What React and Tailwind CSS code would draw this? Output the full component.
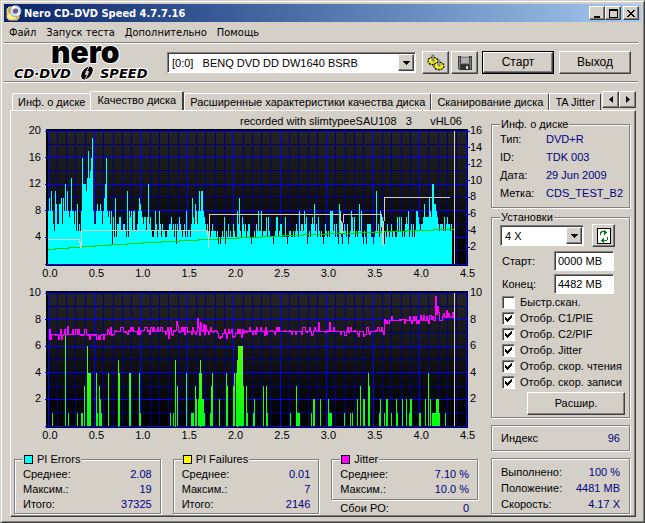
import { useState } from "react";

// PI errors, one base-36 digit per pixel column
const PIE =
  "8a8b865b96699a6a8c8b878d8868595658" +
  "gcccbdhdegj8668988986" +
  "8acg878683" +
  "74a46677556654b4878588556" +
  "8a9876775" +
  "7c675445864586465544556675646365765456484554" +
  "6a76986" +
  "8b8bb8765655456555453434547354645446544" +
  "86a547656456" +
  "6434454658558455574754443457745664447434554454" +
  "56548566586734546769564754543465454888564643984356546" +
  "3458757454595843543666644345b56485763546545645544757" +
  "574546768456464588765667977" +
  "77a87cc998765666575676656";

// PI failures: [x, width, value]
const PIF = [
  [4, 1, 1], [17, 1, 7], [20, 1, 1], [29, 1, 1], [33, 2, 1], [36, 1, 3],
  [39, 1, 6], [40, 3, 4], [48, 1, 4], [49, 1, 1], [51, 1, 3], [52, 1, 2],
  [53, 1, 1], [60, 1, 4], [70, 1, 5], [71, 1, 4], [81, 2, 4], [91, 1, 4],
  [92, 1, 1], [122, 1, 1], [125, 1, 1], [127, 1, 5], [129, 1, 3], [138, 1, 4],
  [143, 3, 1], [147, 1, 3], [148, 1, 2], [150, 1, 2], [151, 1, 4], [152, 1, 5],
  [153, 1, 4], [154, 2, 2], [156, 1, 1], [162, 1, 1], [163, 1, 3], [164, 1, 4],
  [171, 1, 2], [178, 1, 4], [179, 1, 3], [185, 1, 3], [186, 1, 4], [188, 1, 4],
  [189, 1, 5], [190, 5, 6], [195, 1, 3], [198, 1, 3], [199, 1, 1], [205, 1, 1],
  [206, 1, 2], [215, 1, 3], [218, 1, 3], [219, 1, 1], [242, 1, 1], [248, 1, 3],
  [249, 3, 1], [263, 1, 1], [265, 2, 2], [272, 1, 2], [280, 1, 2], [281, 3, 1],
  [296, 1, 1], [302, 1, 1], [304, 1, 1], [309, 1, 2], [312, 1, 3], [315, 2, 2],
  [320, 1, 4], [321, 1, 3], [331, 1, 1], [332, 1, 2], [336, 1, 1], [338, 2, 2],
  [343, 1, 1], [348, 1, 2], [349, 1, 1], [354, 1, 2], [358, 1, 2], [361, 1, 1],
  [362, 2, 2], [371, 2, 1], [377, 1, 2], [380, 1, 4], [382, 1, 2], [384, 4, 1],
  [388, 3, 2], [391, 1, 1], [397, 1, 1],
];

const JITTER_PEAKS = {
  19: 7.5, 128: 7.9, 129: 7.6, 120: 6.6, 149: 8.1, 152: 7.8, 155: 7.7, 157: 7.6,
  171: 6.6, 173: 6.7, 178: 6.6, 193: 6.7, 270: 7.8, 281: 7.8, 310: 6.8, 315: 6.8,
  387: 9.8, 388: 8.4, 389: 9, 390: 8.6, 398: 8.7, 404: 8.6,
};

const PLOT_W = 418;
const PLOT_H = 133;

function jitterAt(x) {
  if (JITTER_PEAKS[x]) return JITTER_PEAKS[x];
  const r = Math.abs(Math.sin(x * 12.9898) * 43758.5453) % 1;
  const spike = r > 0.8 ? 0.25 : r < 0.15 ? -0.2 : 0;
  let base = 7.15;
  if (x < 60) base = 6.9;
  else if (x > 168 && x < 196) base = 7;
  else if (x > 393) base = 8.2;
  else if (x > 335) base = 8;
  return base + (x < 60 ? spike * 1.4 : spike) + (r - 0.5) * 0.15;
}

const pieBars = PIE.slice(0, 407)
  .split("")
  .map((c, i) => `M${i + 0.5} ${PLOT_H}V${Math.round(PLOT_H - parseInt(c, 36) * 6.65)}`)
  .join("");

const jitterLine = Array.from({ length: 406 }, (_, i) => {
  const y = Math.round(PLOT_H - jitterAt(i) * 13.3) + 0.5;
  return `${i ? "V" : "M0.5 "}${y}H${i + 1.5}`;
}).join("");

function Chart({ left, right, label, children }) {
  return (
    <svg
      viewBox="-34 -3 472 151"
      className="block w-full h-auto overflow-visible font-['Liberation_Sans',Arial,sans-serif] text-[11px]"
      role="img"
      aria-label={label}
    >
      <defs>
        <linearGradient id="plotBg" x1="0" y1="0" x2="0" y2="1">
          <stop offset="0" stopColor="#242424" />
          <stop offset="1" stopColor="#000" />
        </linearGradient>
        <linearGradient id="pif" gradientUnits="userSpaceOnUse" x1="0" y1="133" x2="0" y2="40">
          <stop offset="0" stopColor="#00ff14" />
          <stop offset="1" stopColor="#66ff00" />
        </linearGradient>
      </defs>
      <rect x="-2" y="-2" width="422" height="137" fill="#000" />
      <rect width={PLOT_W} height={PLOT_H} fill="url(#plotBg)" />
      <g shapeRendering="crispEdges" fill="none">
        {Array.from({ length: 46 }, (_, i) => (
          <path
            key={i}
            d={`M${Math.floor(i * 9.29) + 0.5} 0V${PLOT_H}`}
            stroke={i % 5 ? "#000080" : "#0000ff"}
          />
        ))}
        {Array.from({ length: 11 }, (_, i) => (
          <path
            key={i}
            d={`M${i % 2 ? 0 : -3} ${Math.floor(i * 13.3) + 0.5}H420`}
            stroke={i % 2 ? "#000080" : "#0000ff"}
          />
        ))}
        {right.ticks && right.labels.map((t, i) => (
          <path key={t} d={`M418 ${Math.floor(i * 16.6) + 0.5}h4`} stroke="#0000ff" />
        ))}
        {children}
        <path d={`M406.5 0V${PLOT_H}`} stroke="#d4d0c8" />
      </g>
      {left.labels.map((t, i) => (
        <text key={t} x="-7" y={3 + i * 26.6} textAnchor="end">{t}</text>
      ))}
      {right.labels.map((t, i) => (
        <text key={t} x="422" y={3 + i * right.step}>{t}</text>
      ))}
      {["0.0", "0.5", "1.0", "1.5", "2.0", "2.5", "3.0", "3.5", "4.0", "4.5"].map((t, i) => (
        <text key={t} x={2 + i * 46.4} y="146" textAnchor="middle">{t}</text>
      ))}
    </svg>
  );
}

function Group({ title, swatch, className = "", children }) {
  return (
    <fieldset
      className={`min-w-0 border border-[#808080] shadow-[1px_1px_0_#fff,inset_1px_1px_0_#fff] ${className}`}
    >
      {title && (
        <legend className="ml-2 flex h-3 items-center gap-1 bg-[#d4d0c8] px-px leading-3">
          {swatch && <span className={`size-[9px] border border-black ${swatch}`} />}
          {title}
        </legend>
      )}
      {children}
    </fieldset>
  );
}

function Row({ label, value, height = "h-4" }) {
  return (
    <div className={`flex items-center justify-between ${height}`}>
      <dt>{label}</dt>
      <dd className="text-[#000080]">{value}</dd>
    </div>
  );
}

function Stats({ rows, className = "px-2 pt-[2px] pb-px" }) {
  return (
    <dl className={className}>
      {rows.map(([k, v]) => (
        <Row key={k} label={k} value={v} height="h-[15px]" />
      ))}
    </dl>
  );
}

const RAISED =
  "bg-[#d4d0c8] border border-t-white border-l-white border-r-[#404040] border-b-[#404040] shadow-[inset_-1px_-1px_0_#808080]";
const SUNKEN =
  "bg-white border border-t-[#808080] border-l-[#808080] border-r-white border-b-white shadow-[inset_1px_1px_0_#404040]";

function Combo({ label, options, className = "" }) {
  return (
    <div className={`relative ${className}`}>
      <select aria-label={label} className={`h-[21px] w-full appearance-none pt-px pl-1 outline-none ${SUNKEN}`}>
        {options.map((o) => (
          <option key={o}>{o}</option>
        ))}
      </select>
      <span className={`pointer-events-none absolute top-[2px] right-[2px] flex h-[17px] w-4 items-center justify-center ${RAISED}`}>
        <svg width="7" height="4" shapeRendering="crispEdges"><path d="M0 0h7v1h-1v1h-1v1h-1v1h-1v-1h-1v-1h-1v-1h-1z" /></svg>
      </span>
    </div>
  );
}

function Check({ label, checked, onChange }) {
  return (
    <label className="flex h-4 items-center gap-[5px] whitespace-nowrap">
      <span className="relative flex">
        <input
          type="checkbox"
          checked={checked}
          onChange={onChange}
          className={`size-[13px] appearance-none ${SUNKEN}`}
        />
        {checked && (
          <svg className="pointer-events-none absolute top-[3px] left-[3px]" width="7" height="7" shapeRendering="crispEdges">
            <path d="M0 2h1v1h1v1h1v-1h1v-1h1v-1h1v-1h1v3h-1v1h-1v1h-1v1h-1v1h-1v-1h-1v-1h-1z" />
          </svg>
        )}
      </span>
      {label}
    </label>
  );
}

function Logo() {
  return (
    <svg width="152" height="37" viewBox="0 0 152 37" className="shrink-0 overflow-visible" role="img" aria-label="nero CD-DVD Speed">
      <g stroke="#fff" strokeWidth="2" strokeLinejoin="round" paintOrder="stroke">
        <text x="42" y="19" className="font-['Inter'] text-[30px] font-black">nero</text>
        <text x="5" y="34" className="font-['DejaVu_Sans'] text-[13px] font-bold italic">CD·DVD</text>
        <text x="91" y="34" className="font-['DejaVu_Sans'] text-[13px] font-bold italic">SPEED</text>
      </g>
      <g transform="rotate(-50 78 29)">
        <ellipse cx="78" cy="29" rx="8" ry="5" stroke="#fff" />
        <ellipse cx="78" cy="29" rx="2.6" ry="1.4" fill="#d4d0c8" />
      </g>
      <path d="M80 23l-3 5M79 30l-3 5" stroke="#d4d0c8" />
    </svg>
  );
}

function AppIcon() {
  return (
    <svg width="16" height="16" viewBox="0 0 16 16" className="shrink-0">
      <path d="M3 2h8l2 3v8l-2 2H3l-2-2V4z" fill="#d9b52c" stroke="#fff3a0" strokeWidth="0.8" />
      <ellipse cx="6" cy="11" rx="4.500" ry="3.500" fill="#f9e98c" />
      <circle cx="9.5" cy="6" r="5.6" fill="#d5deea" stroke="#8b97ae" strokeWidth="0.8" />
      <path d="M9.5 6L5.4 2.6A5.4 5.4 0 0 1 9 .7z" fill="#fff" />
      <path d="M9.5 6l5 2a5.4 5.4 0 0 1-3 3z" fill="#fff" />
      <circle cx="9.5" cy="6" r="2.6" fill="#3565b5" />
      <path d="M8 4.5l3 3" stroke="#e2452d" strokeWidth="1.6" />
    </svg>
  );
}

function GearsIcon() {
  return (
    <svg width="18" height="18" viewBox="0 0 18 18">
      <g stroke="#000" strokeWidth="1.2">
        <ellipse cx="6" cy="7" rx="5" ry="3.8" fill="#e8e000" strokeDasharray="2 1" />
        <ellipse cx="12" cy="12" rx="5" ry="3.8" fill="#e8e000" strokeDasharray="2 1" />
      </g>
      <path d="M2 6h3M3 8h3M8 11h3M9 13h3M8 7h2M14 12h2" stroke="#ffff80" />
      <rect x="5" y="1" width="2" height="6" fill="#9aa" stroke="#444" strokeWidth="0.5" />
      <rect x="11" y="6" width="2" height="6" fill="#9aa" stroke="#444" strokeWidth="0.5" />
    </svg>
  );
}

function FloppyIcon() {
  return (
    <svg width="14" height="14" viewBox="0 0 14 14" shapeRendering="crispEdges">
      <path d="M0 0h14v14h-13l-1-1z" fill="#404040" />
      <path d="M1 1h1v12h-1zM12 2h1v11h-1zM2 7h10v1h-10z" fill="#808080" />
      <rect x="3" y="0" width="8" height="7" fill="#b0b0b0" />
      <rect x="3" y="1" width="8" height="1" fill="#808080" />
      <rect x="3" y="9" width="8" height="5" fill="#303030" />
      <rect x="8" y="10" width="2" height="3" fill="#e0e0e0" />
    </svg>
  );
}

function RefreshIcon() {
  return (
    <svg width="14" height="16" viewBox="0 0 14 16" shapeRendering="crispEdges">
      <rect x="0.5" y="0.5" width="13" height="15" fill="#fff" stroke="#000" />
      <path d="M3 7V4h1V3h3V2h1v1h1v1h-1v1h-1V4H5v1H4v2z" fill="#008000" />
      <path d="M7 2h1v5h-1zM8 3h1v3h-1zM9 4h1v1h-1z" fill="#008000" />
      <path d="M10 9h1v3h-1v1H7v-1h3zM6 10h1v5h-1zM5 11h1v3h-1zM4 12h1v1h-1z" fill="#008000" />
    </svg>
  );
}

const MENU = ["Файл", "Запуск теста", "Дополнительно", "Помощь"];
const CHECKS = ["Быстр.скан.", "Отобр. C1/PIE", "Отобр. C2/PIF", "Отобр. Jitter", "Отобр. скор. чтения", "Отобр. скор. записи"];
const DISC = [
  ["Тип:", "DVD+R"],
  ["ID:", "TDK 003"],
  ["Дата:", "29 Jun 2009"],
  ["Метка:", "CDS_TEST_B2"],
];
const TAB = "h-[17px] shrink-0 whitespace-nowrap rounded-t-[2px] border-t border-l border-white border-r border-r-[#404040] px-[5px]";
const CAPTION_BTN = `flex h-[14px] w-4 items-center justify-center ${RAISED}`;

export default function App() {
  const [checks, setChecks] = useState([false, true, true, true, true, true]);
  const toggle = (i) => setChecks(checks.map((c, k) => (k === i ? !c : c)));

  return (
    <div className="flex min-h-screen w-full flex-col border border-t-[#d4d0c8] border-l-[#d4d0c8] border-r-[#404040] border-b-[#404040] bg-[#d4d0c8] p-[3px] font-['Liberation_Sans',Arial,sans-serif] text-[11px] leading-[13px] text-black shadow-[inset_1px_1px_0_#fff,inset_-1px_-1px_0_#808080]">
      <header className="flex h-[18px] shrink-0 items-center gap-[2px] bg-linear-to-r from-[#0a246a] to-[#a6caf0] pr-[2px] pl-[2px]">
        <AppIcon />
        <h1 className="flex-1 font-['DejaVu_Sans_Condensed','DejaVu_Sans',sans-serif] text-[11px] font-bold text-white">
          Nero CD-DVD Speed 4.7.7.16
        </h1>
        <div className="flex">
          <button aria-label="Свернуть" className={CAPTION_BTN}>
            <svg width="9" height="9"><path d="M1 7h6v2h-6z" /></svg>
          </button>
          <button aria-label="Развернуть" className={CAPTION_BTN}>
            <svg width="9" height="9" shapeRendering="crispEdges"><path d="M0 0h9v9h-9zM1 2v6h7v-6z" fillRule="evenodd" /></svg>
          </button>
          <button aria-label="Закрыть" className={`ml-[2px] ${CAPTION_BTN}`}>
            <svg width="8" height="7" shapeRendering="crispEdges">
              <path d="M0 0h2v1h1v1h2v-1h1v-1h2v1h-1v1h-1v1h-1v1h1v1h1v1h1v1h-2v-1h-1v-1h-2v1h-1v1h-2v-1h1v-1h1v-1h1v-1h-1v-1h-1v-1h-1z" />
            </svg>
          </button>
        </div>
      </header>

      <nav className="mr-[3px] flex h-[21px] shrink-0 items-center gap-[10px] border-b border-[#808080] pl-[5px] font-['DejaVu_Sans_Condensed','DejaVu_Sans',sans-serif] text-[11px] shadow-[0_1px_0_#fff]">
        {MENU.map((m) => (
          <button key={m}>{m}</button>
        ))}
      </nav>

      <div className="mr-[3px] flex h-[39px] shrink-0 items-center border-b border-[#808080] pt-px pr-[7px] pl-[5px] shadow-[0_1px_0_#fff]">
        <Logo />
        <Combo
          label="Привод"
          className="mr-[6px] ml-[6px] flex-1"
          options={["[0:0]\u00a0\u00a0\u00a0BENQ DVD DD DW1640 BSRB"]}
        />
        <button aria-label="Настройки" className={`mr-[2px] flex h-[23px] w-[27px] items-center justify-center ${RAISED}`}>
          <GearsIcon />
        </button>
        <button aria-label="Сохранить" className={`mr-1 flex h-[23px] w-[27px] items-center justify-center ${RAISED}`}>
          <FloppyIcon />
        </button>
        <div className="mr-[5px] border border-black">
          <button className={`block h-[21px] w-[70px] text-[12px] ${RAISED}`}>Старт</button>
        </div>
        <button className={`h-[23px] w-[72px] text-[12px] ${RAISED}`}>Выход</button>
      </div>

      <div className="mx-[6px] mt-[9px] mr-[5px] flex h-[19px] shrink-0 items-end">
        <div role="tablist" className="flex min-w-0 flex-1 items-end overflow-hidden pl-[2px]">
          <button role="tab" className={`border-r-0 ${TAB}`}>Инф. о диске</button>
          <button role="tab" aria-selected="true" className="h-[19px] shrink-0 whitespace-nowrap rounded-t-[2px] border-t border-r-2 border-l border-white border-r-[#404040] px-[6px] pb-[2px]">
            Качество диска
          </button>
          <button role="tab" className={TAB}>Расширенные характеристики качества диска</button>
          <button role="tab" className={TAB}>Сканирование диска</button>
          <button role="tab" className={TAB}>TA Jitter</button>
        </div>
        <div className="flex self-start">
          <button aria-label="Назад" className={`flex h-[17px] w-[17px] items-center justify-center ${RAISED}`}>
            <svg width="4" height="7"><path d="M4 0v7L0 3.500z" /></svg>
          </button>
          <button aria-label="Вперёд" className={`flex h-[17px] w-[17px] items-center justify-center ${RAISED}`}>
            <svg width="4" height="7"><path d="M0 0v7L4 3.500z" /></svg>
          </button>
        </div>
      </div>

      <main className="mx-[6px] mr-[5px] mb-[2px] flex flex-1 gap-[5px] border border-t-white border-l-white border-r-[#404040] border-b-[#404040] pt-1 pr-[5px] pl-[3px] shadow-[inset_-1px_-1px_0_#808080]">
        <div className="flex min-w-0 flex-1 flex-col">
          <p className="pl-[226px] leading-[13px] whitespace-pre">recorded with slimtypeeSAU108   3      vHL06</p>
          <Chart
            label="PI Errors"
            left={{ labels: [20, 16, 12, 8, 4] }}
            right={{ labels: [16, 14, 12, 10, 8, 6, 4, 2], step: 16.6, ticks: true }}
          >
            <path d={pieBars} stroke="#00ffff" />
            <path
              d="M0 118.500H7V117.500H20V116.500H34V115.500H47V114.500H62V113.500H79V112.500H95V111.500H113V110.500H131V109.500H150V108.500H169V107.500H190V106.500H213V105.500H234V104.500H255V103.500H278V102.500H308V101.500H333V100.500H358V99.500H385V98.500H406"
              stroke="#00d000"
            />
            <path
              d="M0 108.500H31.500V112M32.500 110V117M33.500 117V99.500H159.500V104M160.500 103V117M161.500 106V83.500H292.500V92M293.500 90V102M294.500 102V92M295.500 92V83.500H333.500V96M334.500 95V114M335.500 114V90M336.500 90V66.500H402"
              stroke="#d4d0c8"
            />
          </Chart>
          <div className="mt-[11px]">
            <Chart
              label="PI Failures, Jitter"
              left={{ labels: [10, 8, 6, 4, 2] }}
              right={{ labels: [10, 8, 6, 4, 2], step: 26.6 }}
            >
              {PIF.map(([x, w, v]) => (
                <rect key={x} x={x} y={Math.round(PLOT_H - v * 13.3)} width={w} height={Math.round(v * 13.3)} fill="url(#pif)" />
              ))}
              <path d={jitterLine} stroke="#ff00ff" />
            </Chart>
          </div>

          <div className="mt-auto mr-[8px] grid grid-cols-3 items-start gap-3">
            <Group title="PI Errors" swatch="bg-[#00ffff]">
              <Stats rows={[["Среднее:", "2.08"], ["Максим.:", "19"], ["Итого:", "37325"]]} />
            </Group>
            <Group title="PI Failures" swatch="bg-[#ffff00]">
              <Stats rows={[["Среднее:", "0.01"], ["Максим.:", "7"], ["Итого:", "2146"]]} />
            </Group>
            <div>
              <Group title="Jitter" swatch="bg-[#ff00ff]">
                <Stats rows={[["Среднее:", "7.10 %"], ["Максим.:", "10.0 %"]]} className="px-2 py-[2px]" />
              </Group>
              <Stats rows={[["Сбои PO:", "0"]]} className="px-[9px] pt-px" />
            </div>
          </div>
        </div>

        <aside className="flex w-[139px] shrink-0 flex-col pb-[2px]">
          <div className="pt-[3px]">
            <Group title="Инф. о диске">
              <dl className="grid grid-cols-[46px_1fr] px-2 pb-[5px] leading-[18px]">
                {DISC.map(([k, v]) => (
                  <div key={k} className="col-span-2 grid grid-cols-subgrid">
                    <dt>{k}</dt>
                    <dd className="text-[#000080]">{v}</dd>
                  </div>
                ))}
              </dl>
            </Group>
          </div>

          <Group title="Установки" className="mt-[3px]">
            <div className="flex items-center gap-2 px-2 pt-px">
              <Combo label="Скорость" className="w-[84px]" options={["4 X"]} />
              <button aria-label="Обновить" className={`flex size-[23px] items-center justify-center ${RAISED}`}>
                <RefreshIcon />
              </button>
            </div>
            <div className="grid grid-cols-[52px_60px] items-center gap-y-[3px] pt-1 pl-[10px]">
              <label htmlFor="from">Старт:</label>
              <input id="from" defaultValue="0000 MB" className={`h-5 w-full px-[3px] outline-none ${SUNKEN}`} />
              <label htmlFor="to">Конец:</label>
              <input id="to" defaultValue="4482 MB" className={`h-5 w-full px-[3px] outline-none ${SUNKEN}`} />
            </div>
            <div className="pl-[10px]">
              {CHECKS.map((c, i) => (
                <Check key={c} label={c} checked={checks[i]} onChange={() => toggle(i)} />
              ))}
            </div>
            <div className="flex justify-end pt-[2px] pr-1 pb-[2px]">
              <button className={`h-[23px] w-[98px] ${RAISED}`}>Расшир.</button>
            </div>
          </Group>

          <Group className="mt-auto">
            <dl className="px-[9px] py-1">
              <Row label="Индекс" value="96" />
            </dl>
          </Group>

          <Group className="mt-[7px]">
            <dl className="px-[9px] pt-[5px] pb-px">
              <Row label="Выполнено:" value="100 %" />
              <Row label="Положение:" value="4481 MB" />
              <Row label="Скорость:" value="4.17 X" />
            </dl>
          </Group>
        </aside>
      </main>
    </div>
  );
}
